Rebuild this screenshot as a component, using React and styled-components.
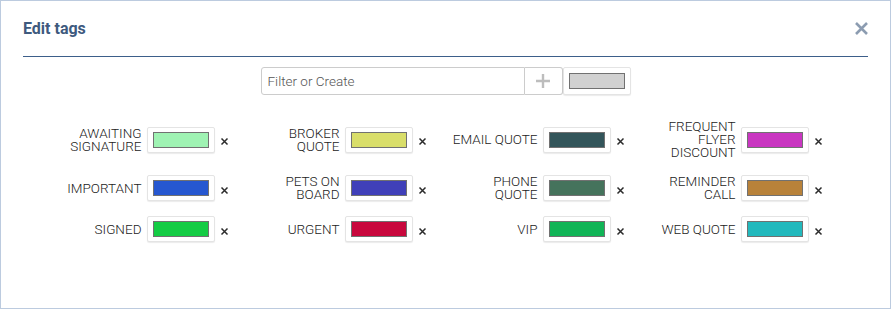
import React from "react";
import styled, { createGlobalStyle } from "styled-components";

const Global = createGlobalStyle`
  html, body { margin: 0; padding: 0; background: #fff; }
  body { font-family: Roboto, "Liberation Sans", sans-serif; }
  * { box-sizing: border-box; }
`;

const Dialog = styled.div`
  width: 891px;
  height: 309px;
  border: 1px solid #bccbdf;
  background: #fff;
`;

const Header = styled.div`
  display: flex;
  align-items: center;
  justify-content: space-between;
  height: 56px;
  margin: 0 22px;
  border-bottom: 1px solid #3d5f8a;
`;

const Title = styled.h2`
  margin: 0;
  font-size: 16px;
  font-weight: 700;
  color: #3e5a7e;
`;

const CloseButton = styled.button`
  border: 0;
  padding: 0;
  background: none;
  display: flex;
  width: 13px;
  height: 13px;
  color: #8c9cb1;
  cursor: pointer;
`;

const FilterRow = styled.div`
  display: flex;
  justify-content: center;
  margin-top: 10px;
`;

const FilterInput = styled.input`
  width: 264px;
  height: 28px;
  border: 1px solid #cccccc;
  border-radius: 3px 0 0 3px;
  padding: 0 6px;
  font-family: Roboto, "Liberation Sans", sans-serif;
  font-size: 13.5px;
  font-weight: 300;
  color: #333;
  outline: none;
  &::placeholder { color: #555555; }
`;

const AddButton = styled.button`
  width: 38px;
  height: 28px;
  border: 1px solid #cccccc;
  border-left: 0;
  border-radius: 0 3px 3px 0;
  background: #fff;
  display: flex;
  align-items: center;
  justify-content: center;
  padding: 0;
  color: #bdbdbd;
`;

const SwatchBox = styled.div`
  width: ${(p) => p.$w || 68}px;
  height: ${(p) => p.$h || 26}px;
  border: 1px solid #e4e4e4;
  border-radius: 2px;
  background: #fff;
  box-shadow: 0 1px 1px rgba(0, 0, 0, 0.08);
  display: flex;
  align-items: center;
  justify-content: center;
`;

const Swatch = styled.div`
  width: 56px;
  height: 16px;
  border: 1px solid #717171;
  background: ${(p) => p.$color};
`;

const Grid = styled.div`
  display: grid;
  grid-template-columns: repeat(4, 198px);
  justify-content: center;
  row-gap: 14px;
  margin-top: 24px;
`;

const Cell = styled.div`
  display: grid;
  grid-template-columns: 92px 68px 9px;
  column-gap: 5px;
  align-items: center;
`;

const Label = styled.div`
  text-align: right;
  font-size: 13.5px;
  font-weight: 300;
  line-height: 13px;
  padding: 1px 0;
  color: #222222;
  text-transform: uppercase;
`;

const Remove = styled.button`
  border: 0;
  padding: 0;
  background: none;
  width: 9px;
  height: 9px;
  margin-top: 4px;
  display: flex;
  color: #2b2b2b;
  cursor: pointer;
`;

const tags = [
  ["Awaiting<br>Signature", "#9ff3b3"],
  ["Broker<br>Quote", "#d9de6a"],
  ["Email Quote", "#33555a"],
  ["Frequent<br>Flyer<br>Discount", "#c936c1"],
  ["Important", "#2657d0"],
  ["Pets on<br>Board", "#4040b9"],
  ["Phone<br>Quote", "#45735c"],
  ["Reminder<br>Call", "#b8823a"],
  ["Signed", "#14cc44"],
  ["Urgent", "#c8083d"],
  ["VIP", "#10b456"],
  ["Web Quote", "#22b9bd"],
];

const XIcon = ({ size, stroke, inset = 1 }) => (
  <svg width={size} height={size} viewBox={`0 0 ${size} ${size}`} fill="none">
    <path
      d={`M${inset} ${inset}L${size - inset} ${size - inset}M${size - inset} ${inset}L${inset} ${size - inset}`}
      stroke="currentColor"
      strokeWidth={stroke}
    />
  </svg>
);

export default function App() {
  return (
    <>
      <Global />
      <Dialog>
        <Header>
          <Title>Edit tags</Title>
          <CloseButton aria-label="Close">
            <XIcon size={13} stroke={2.6} />
          </CloseButton>
        </Header>
        <FilterRow>
          <FilterInput placeholder="Filter or Create" />
          <AddButton aria-label="Add">
            <svg width="14" height="14" viewBox="0 0 14 14">
              <path d="M7 0V14M0 7H14" stroke="currentColor" strokeWidth="2.4" />
            </svg>
          </AddButton>
          <SwatchBox $w={68} $h={28}>
            <Swatch $color="#d1d1d1" />
          </SwatchBox>
        </FilterRow>
        <Grid>
          {tags.map(([name, color]) => (
            <Cell key={name}>
              <Label>
                {name.split("<br>").map((line, i, a) => (
                  <React.Fragment key={i}>
                    {line}
                    {i < a.length - 1 && <br />}
                  </React.Fragment>
                ))}
              </Label>
              <SwatchBox>
                <Swatch $color={color} />
              </SwatchBox>
              <Remove aria-label="Remove">
                <XIcon size={9} stroke={1.5} inset={1.5} />
              </Remove>
            </Cell>
          ))}
        </Grid>
      </Dialog>
    </>
  );
}
